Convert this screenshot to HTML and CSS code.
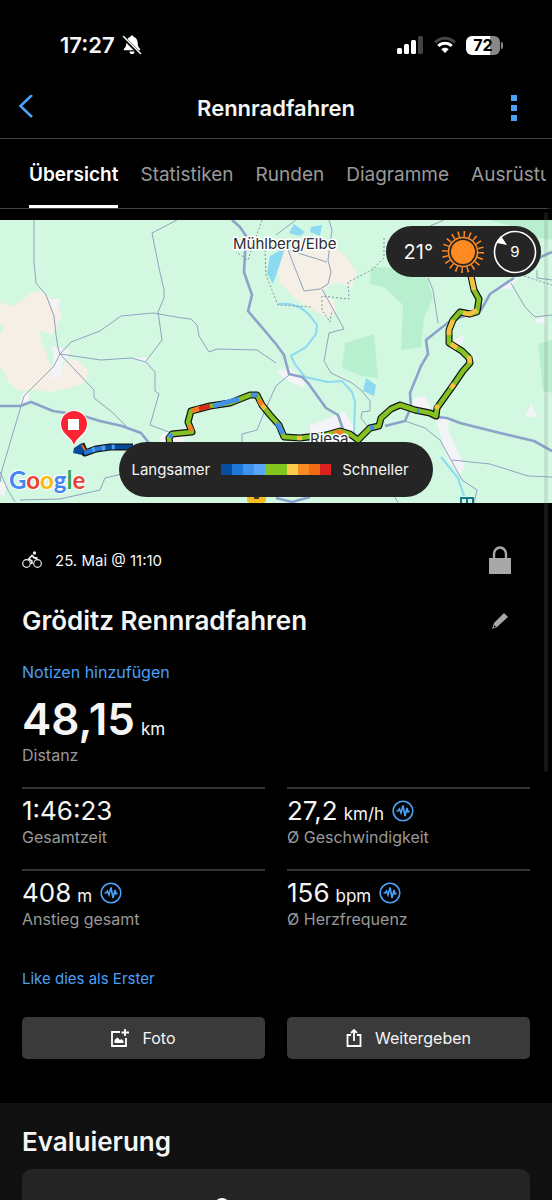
FILE: index.html
```html
<!DOCTYPE html>
<html lang="de">
<head>
  <meta charset="UTF-8">
  <meta name="viewport" content="width=device-width, initial-scale=1">
  <title>Rennradfahren</title>
  <link rel="stylesheet" href="styles.css">
</head>
<body>
  <div class="status-bar">
    <div class="status-left">
      <span class="time">17:27</span>
      <svg class="bell" width="20" height="20" viewBox="0 0 20 20">
        <path fill="#fff" d="M10 0.500c1 0 1.600.6 1.800 1.500 2.600.8 3.800 3 3.900 6 .1 3.300 1 4.500 2.300 5.700.6.700.2 1.600-.6 1.600H2.600c-.8 0-1.200-.9-.6-1.600C3.300 12.500 4.200 11.300 4.300 8c.1-3 1.300-5.200 3.900-6C8.400 1.100 9 .5 10 .5zM7.300 16.500h5.400c-.2 1.600-1.300 2.600-2.700 2.600s-2.500-1-2.700-2.600z"/>
        <path stroke="#000" stroke-width="3.600" d="M1.500 2.500 18 19"/>
        <path stroke="#fff" stroke-width="1.500" stroke-linecap="round" d="M1.500 1.500 18.500 18.500"/>
      </svg>
    </div>
    <div class="status-right">
      <svg width="27" height="18" viewBox="0 0 27 18">
        <rect x="0" y="12" width="5" height="6" rx="1.500" fill="#fff"/>
        <rect x="7" y="8" width="5" height="10" rx="1.500" fill="#fff"/>
        <rect x="14" y="4" width="5" height="14" rx="1.500" fill="#fff"/>
        <rect x="21" y="0" width="5" height="18" rx="1.500" fill="#444"/>
      </svg>
      <svg width="22" height="18" viewBox="0 0 22 18" fill="none">
        <path stroke="#444" stroke-width="3" d="M1 6.500C6.500 .7 15.500.7 21 6.500"/>
        <path stroke="#fff" stroke-width="3" d="M4.300 10c3.800-3.800 9.600-3.800 13.400 0"/>
        <path fill="#fff" d="M7.300 13.200c2.200-2 5.200-2 7.400 0L11 17z"/>
      </svg>
      <span class="battery"><span class="battery-level">72</span></span>
    </div>
  </div>

  <header class="header">
    <button class="icon-button" aria-label="Zurück">
      <svg width="16" height="26" viewBox="0 0 16 26" fill="none" stroke="#4ba0f8" stroke-width="2.600"><path d="M14 0 2.500 11 14 22"/></svg>
    </button>
    <h1>Rennradfahren</h1>
    <button class="icon-button menu" aria-label="Menü">
      <svg width="6" height="26" viewBox="0 0 6 26" fill="#4ba0f8"><path d="M0 0h6v6H0zM0 10h6v6H0zM0 20h6v6H0z"/></svg>
    </button>
  </header>

  <nav class="tabs">
    <a href="#uebersicht" class="active">Übersicht</a>
    <a href="#statistiken">Statistiken</a>
    <a href="#runden">Runden</a>
    <a href="#diagramme">Diagramme</a>
    <a href="#ausruestung">Ausrüstung</a>
  </nav>

  <main class="content" id="uebersicht">
    <div class="map">
      <svg class="map-canvas" viewBox="0 220 552 283">
        <rect y="220" width="552" height="283" fill="#d2f8e2"/>
        <!-- towns and open land -->
        <g fill="#f5efe5">
          <path d="M0 302 10 306 20 302 31 293 42 291 50 298 58 305 62 315 58 325 52 335 39 330 44 347 50 364 60 368 70 358 80 362 88 370 86 382 70 388 50 392 34 390 20 391 10 384 0 366V334l4-6-4-5z"/>
          <path d="M283 250 300 246 330 245 345 255 357 272 352 287 335 282 322 292 334 300 336 312 328 318 308 307 292 296 280 282 277 270z"/>
        </g>
        <g fill="#f4f4f8">
          <path d="M49 299 60 299 59 307 54 309zM52 346 70 350 68 358 61 364 62 377 50 378 54 360zM22 394 30 391 28 403 20 402zM160 437 168 430 185 436 184 443H160zM277 372 290 368 306 382 304 388 290 382zM310 425 344 412 356 430 350 442H310zM413 398 426 396 432 412 412 412zM436 420 450 418 448 430 465 466 460 476 448 460zM531 404 538 418 525 416zM455 340 464 334 462 346 454 346zM538 318 546 317 545 324 534 322zM496 290 520 276 510 289zM128 358 148 358 146 363zM0 482 6 484 4 498 0 494z"/>
        </g>
        <!-- forest -->
        <g fill="#b8f0cf">
          <path d="M371 267 417 268 427 278 433 298 424 318 421 347 401 350 403 305 384 287 370 284zM345 343 374 334 378 378 362 376 342 368zM488 220H552V240L530 237 520 228zM538 344 552 340V393L543 391z"/>
        </g>
        <!-- water -->
        <path fill="#8bdaf2" d="M294 224 305 232 300 236 289 233zM311 227 322 225 320 236 310 232zM270 256 285 248 280 264 273 284 267 273zM366 378 376 385 374 396 363 391z"/>
        <g fill="none" stroke="#8bdaf2" stroke-width="2">
          <path d="M278 304C292 303 302 306 311 317L317 325 316 334 306 347 291 356 295 364 305 377 328 382 342 381 352 392 355 402 354 434M441 457 458 478 464 496"/>
        </g>
        <!-- minor roads -->
        <g fill="none" stroke="#8fa3bd" stroke-width="1">
          <path d="M34 220V262L36 283 46 295 54 316 56 335 58 348 60 354 71 342 100 331 121 316 153 313 182 318 191 319 197 325 199 336 209 352 217 349 257 350 276 363"/>
          <path d="M177 220 152 233 159 268 164 290 164 298 158 312 162 340 146 361M60 354 101 360 131 358 146 362 155 372 155 391 159 394 150 425 169 432"/>
          <path d="M60 354 54 366 24 396 2 470 0 482M60 354 94 390 94 398 112 412 126 426M0 472 8 490 15 502M20 500 60 499 100 490 105 478 122 474"/>
          <path d="M329 220 332 230 328 260 331 272 328 284 320 289 304 291 288 250M276 235 296 220M288 250 327 262M322 289 344 329 329 333 324 361 331 373 352 383 362 391 370 401 370 411 362 412 361 418 368 427"/>
          <path d="M428 278 433 290 438 323M511 283 525 307 535 317 552 315M537 270V278L552 280M430 226 444 220M405 421 425 428 440 440 462 480 477 490 474 503M452 460 490 464 528 476 552 477"/>
          <path d="M242 442V434L257 430 266 408 276 386 289 375M395 497 398 503"/>
        </g>
        <g fill="none" stroke="#8095a5" stroke-width="1" stroke-dasharray="2 2">
          <path d="M262 220 248 260 236 252M265 250 266 275 278 305 312 307M384 238 384 258 372 270 348 282 349 299 322 296 322 310 330 322 332 310M524 276 552 285"/>
        </g>
        <!-- main roads -->
        <g fill="none" stroke="#8ba3ca" stroke-width="2.600" stroke-linejoin="round">
          <path d="M232 220 240 227 246 236 244 272 252 295 248 311 276 344 284 355 289 374 302 377 308 383 326 408 338 415 344 432"/>
          <path d="M0 406 20 406 31 402 53 411 80 415 100 421 122 426 141 433 149 443M276 498 292 502 310 497"/>
          <path d="M552 252 534 260M514 278 490 294 481 310 450 321 426 340 428 354 421 366 410 393 411 407 405 421 385 426M437 417 447 418 460 423 500 433 534 441 552 451"/>
        </g>
        <!-- track -->
        <g fill="none" stroke-linejoin="round">
          <path stroke="#111" stroke-width="7" d="M471 276 474 290 479 299 477 312 470 314 460 312 453 320 449 330 449 343 462 351 469 358 470 363 463 371 452 387 437 408 436 416 430 413 415 410 400 405 391 409 381 418 379 426 370 428 358 440 350 434 340 431 326 435 300 438 284 437 279 425 270 415 262 405 257 395 250 395 230 403 210 406 191 411 188 422 192 432 172 434 169 438 170 445M133 447 110 447 96 449 85 453 81 444"/>
          <g stroke-width="4.600">
            <path stroke="#84c224" d="M471 276 474 290 479 299 477 312 470 314 460 312 453 320 449 330 449 343 462 351 469 358 470 363 463 371 452 387 437 408 436 416 430 413 415 410 400 405 391 409 381 418 379 426 370 428 358 440 350 434 340 431 326 435 300 438 284 437 279 425 270 415 262 405 257 395 250 395 230 403 210 406 191 411 188 422 192 432 172 434 169 438 170 445"/>
            <path stroke="#f3c240" d="M471 276 474 290M477 310 470 314 463 313M453 320 449 330 449 335M451 344 457 348M469 356 470 363M454 384 451 388M438 405 436 409M302 438 297 438M265 409 260 402"/>
            <path stroke="#f57c1f" d="M192 431 189 425M192 411 200 408M343 432 334 433M262 405 259 400"/>
            <path stroke="#dc2b1c" d="M199 409 210 406"/>
            <path stroke="#448fe8" d="M213 406 239 399M172 434 169 437M251 395 258 395M283 434 277 423M419 411 417 411M370 428 374 427"/>
            <path stroke="#2876cf" d="M84 453 96 449 110 447"/>
            <path stroke="#084a9c" d="M106 447H133"/>
            <path stroke="#4ba0f8" stroke-dasharray="3 7" d="M92 450 110 447 121 447"/>
          </g>
          <path fill="#084a9c" d="M74 448 82 443 84 450 82 455 73 453z"/>
          <path stroke="#ef6b18" stroke-width="2" d="M82 445 85 450"/>
        </g>
        <path fill="#fff" d="M74 447C72 439 60 435 60 424a14 14 0 0 1 28 0C88 435 76 439 74 447z"/>
        <path fill="#fb2432" d="M74 445C72 437 61 434 61 424a13 13 0 0 1 26 0C87 434 76 437 74 445z"/>
        <path fill="#fff" d="M68 419h11v11H68z"/>
        <g class="map-label">
          <text x="233" y="249">Mühlberg/Elbe</text>
          <text x="310" y="444">Riesa</text>
        </g>
        <path fill="#f5bd1d" d="M247 495H266V500Q266 503 262 503H251Q247 503 247 500z"/>
        <path stroke="#493a0a" stroke-width="2" d="M254 498H259"/>
        <path fill="#d2f8e2" stroke="#16798d" stroke-width="2" d="M461 498H473V506H461zM467 498V503"/>
      </svg>
      <div class="google"><span class="g-blue">G</span><span class="g-red">o</span><span class="g-yellow">o</span><span class="g-blue">g</span><span class="g-green">l</span><span class="g-red">e</span></div>
      <div class="weather">
        <span>21°</span>
        <svg width="44" height="44" viewBox="0 0 44 44">
          <circle cx="22" cy="22" r="18" fill="none" stroke="#ff8a22" stroke-width="6" stroke-dasharray="1.500 4.155"/>
          <circle cx="22" cy="22" r="14.500" fill="#252525" stroke="#ff8a22" stroke-width="1.500"/>
          <circle cx="22" cy="22" r="12" fill="#ff8a22"/>
        </svg>
        <svg width="44" height="44" viewBox="0 0 44 44">
          <circle cx="22" cy="22" r="20.500" fill="none" stroke="#fff" stroke-width="1.600"/>
          <path fill="#fff" d="M4 13 8 6 14 15z"/>
          <text class="wind" x="22" y="27" text-anchor="middle">9</text>
        </svg>
      </div>
      <div class="legend">
        <span>Langsamer</span>
        <div class="legend-scale"><i></i><i></i><i></i><i></i><i></i><i></i><i></i><i></i><i></i><i></i></div>
        <span>Schneller</span>
      </div>
    </div>

    <section class="activity">
      <div class="activity-row date-row">
        <svg width="20" height="18" viewBox="0 0 20 18" fill="none" stroke="#eee" stroke-width="1.200">
          <circle cx="4.500" cy="12.500" r="3.800"/>
          <circle cx="15.500" cy="12.500" r="3.800"/>
          <circle cx="12.500" cy="2" r="1.700" fill="#eee" stroke="none"/>
          <path stroke-width="1.800" d="M9.800 13V10L6.800 8 10 4.500 12.500 7H15.500"/>
        </svg>
        <span class="date">25. Mai @ 11:10</span>
        <button class="icon-button" aria-label="Privatsphäre">
          <svg width="22" height="28" viewBox="0 0 22 28"><path fill="#a8a8a8" d="M0 12h22v16H0z"/><path fill="none" stroke="#a8a8a8" stroke-width="2.400" d="M5 13V8a6 6.500 0 0 1 12 0v5"/></svg>
        </button>
      </div>
      <div class="activity-row title-row">
        <h2>Gröditz Rennradfahren</h2>
        <button class="icon-button edit" aria-label="Bearbeiten">
          <svg width="18" height="18" viewBox="0 0 18 18"><path fill="#a8a8a8" d="M13 1 17 5 6 15 1 17 3 11z"/><path fill="#000" d="M3.200 13 5 15 2.700 15.600z"/></svg>
        </button>
      </div>
      <a class="link" href="#notizen">Notizen hinzufügen</a>

      <div class="distance">
        <div class="value"><strong>48,15</strong> <span class="unit">km</span></div>
        <div class="label">Distanz</div>
      </div>

      <div class="stats">
        <div class="stat">
          <div class="value">1:46:23</div>
          <div class="label">Gesamtzeit</div>
        </div>
        <div class="stat">
          <div class="value">27,2 <span class="unit">km/h</span>
            <svg class="pulse" viewBox="0 0 22 22"><circle cx="11" cy="11" r="9.800"/><path d="M4.500 11H6L7.500 9 9 13 11 5.500 13 16 15 8 16 12 17.500 11"/></svg>
          </div>
          <div class="label">Ø Geschwindigkeit</div>
        </div>
        <div class="stat">
          <div class="value">408 <span class="unit">m</span>
            <svg class="pulse" viewBox="0 0 22 22"><circle cx="11" cy="11" r="9.800"/><path d="M4.500 11H6L7.500 9 9 13 11 5.500 13 16 15 8 16 12 17.500 11"/></svg>
          </div>
          <div class="label">Anstieg gesamt</div>
        </div>
        <div class="stat">
          <div class="value">156 <span class="unit">bpm</span>
            <svg class="pulse" viewBox="0 0 22 22"><circle cx="11" cy="11" r="9.800"/><path d="M4.500 11H6L7.500 9 9 13 11 5.500 13 16 15 8 16 12 17.500 11"/></svg>
          </div>
          <div class="label">Ø Herzfrequenz</div>
        </div>
      </div>

      <a class="link like" href="#like">Like dies als Erster</a>

      <div class="actions">
        <button class="action">
          <svg width="18" height="20" viewBox="0 0 18 20" fill="none" stroke="#fff" stroke-width="1.800"><path d="M9 4H1V18H15V10M14 1V8M10.500 4.500H18"/><path fill="#fff" stroke="none" d="M3.500 15V12L6.500 9.500 9 12 10.500 11 12.500 13V15z"/></svg>
          Foto
        </button>
        <button class="action">
          <svg width="16" height="20" viewBox="0 0 16 20" fill="none" stroke="#fff" stroke-width="1.800"><path d="M5 7H1.500V18H14.500V7H11M8 13V3M5 5 8 2 11 5"/></svg>
          Weitergeben
        </button>
      </div>
    </section>

    <section class="rating">
      <h2>Evaluierung</h2>
      <div class="rating-card">
        <svg width="16" height="24" viewBox="0 0 16 24" fill="none" stroke="#fff" stroke-width="2"><circle cx="8" cy="8" r="7"/></svg>
      </div>
    </section>
  </main>
  <div class="scroll-thumb"></div>
</body>
</html>
```

FILE: styles.css
```css
* {
  box-sizing: border-box;
}
body {
  font-family: Inter, Roboto, sans-serif;
  background: #000;
  color: #f5f5f5;
  margin: 0;
  height: 100vh;
  display: flex;
  flex-direction: column;
  overflow: hidden;
}
h1, h2 {
  margin: 0;
  font-weight: 600;
}
a {
  text-decoration: none;
}
svg {
  display: block;
  flex-shrink: 0;
}
button {
  font-family: inherit;
  color: inherit;
  border: none;
  cursor: pointer;
}

.status-bar {
  display: flex;
  justify-content: space-between;
  align-items: center;
  height: 78px;
  padding: 12px 50px 0 60px;
  flex-shrink: 0;
}
.status-left, .status-right {
  display: flex;
  align-items: center;
  gap: 10px;
}
.status-left {
  gap: 7px;
}
.time {
  font-size: 22px;
  font-weight: 600;
}
.battery {
  position: relative;
  width: 34px;
  height: 19px;
  border-radius: 6px;
  background: linear-gradient(90deg, #fff 72%, #888 72%);
  margin-right: 2px;
}
.battery::after {
  content: "";
  position: absolute;
  right: -3px;
  top: 6px;
  width: 2px;
  height: 7px;
  border-radius: 0 2px 2px 0;
  background: #888;
}
.battery-level {
  display: block;
  text-align: center;
  color: #000;
  font-size: 16px;
  line-height: 19px;
  font-weight: 700;
}

.header {
  display: flex;
  justify-content: space-between;
  align-items: center;
  height: 61px;
  padding: 0 18px;
  border-bottom: 1px solid #444;
  flex-shrink: 0;
}
.header h1 {
  font-size: 22px;
}
.icon-button {
  display: flex;
  justify-content: center;
  align-items: center;
  background: none;
  padding: 0;
}
.header .icon-button:first-child {
  width: 16px;
  margin-right: 18px;
}
.header .menu {
  justify-content: flex-end;
  padding-right: 17px;
  width: 34px;
}

.tabs {
  display: flex;
  gap: 22px;
  height: 70px;
  padding-left: 29px;
  border-bottom: 1px solid #444;
  border-right: 6px solid #000;
  overflow: hidden;
  flex-shrink: 0;
}
.tabs a {
  display: flex;
  align-items: center;
  padding-top: 4px;
  color: #999;
  font-size: 19px;
  border-bottom: 3px solid transparent;
}
.tabs .active {
  color: #fff;
  font-weight: 600;
  border-bottom-color: #fff;
}

.content {
  flex: 1;
  overflow-y: auto;
  scrollbar-width: none;
  padding-top: 11px;
}
.scroll-thumb {
  position: absolute;
  right: 4px;
  top: 212px;
  width: 4px;
  height: 560px;
  border-radius: 2px;
  background: rgba(120, 120, 120, 0.18);
}

.map {
  position: relative;
}
.map-canvas {
  width: 100%;
  height: auto;
}
.map-label {
  font-size: 15px;
  fill: #2c2c34;
  stroke: #fff;
  stroke-width: 3px;
  paint-order: stroke;
}
.google {
  position: absolute;
  left: 9px;
  bottom: 8px;
  font-family: Lato, sans-serif;
  font-size: 24px;
  line-height: 30px;
  font-weight: 700;
  text-shadow: 0 0 2px #fff, 1px 1px 1px #fff, -1px -1px 1px #fff;
}
.g-blue { color: #4285f4; }
.g-red { color: #ea4335; }
.g-yellow { color: #fbbc04; }
.g-green { color: #34a853; }

.weather {
  position: absolute;
  top: 6px;
  right: 11px;
  display: flex;
  align-items: center;
  gap: 8px;
  height: 51px;
  padding: 0 4px 0 18px;
  border-radius: 26px;
  background: #252525;
  font-size: 20px;
}
.wind {
  fill: #fff;
  font-size: 15px;
}
.legend {
  position: absolute;
  left: 50%;
  bottom: 6px;
  transform: translateX(-50%);
  display: flex;
  align-items: center;
  justify-content: center;
  gap: 11px;
  height: 55px;
  width: 314px;
  padding-right: 12px;
  border-radius: 28px;
  background: #252525;
  font-size: 15px;
}
.legend-scale {
  display: flex;
}
.legend-scale i {
  width: 11px;
  height: 11px;
}
.legend-scale i:nth-child(1) { background: #084fa4; }
.legend-scale i:nth-child(2) { background: #1e78d5; }
.legend-scale i:nth-child(3) { background: #3f92f0; }
.legend-scale i:nth-child(4) { background: #58a6fa; }
.legend-scale i:nth-child(5),
.legend-scale i:nth-child(6) { background: #84c41f; }
.legend-scale i:nth-child(7) { background: #fccb4c; }
.legend-scale i:nth-child(8) { background: #fb8c24; }
.legend-scale i:nth-child(9) { background: #f26a12; }
.legend-scale i:nth-child(10) { background: #dc2020; }

.activity {
  padding: 35px 22px 44px;
}
.activity-row {
  display: flex;
  align-items: center;
}
.activity-row .icon-button {
  width: 22px;
  margin-left: auto;
  margin-right: 19px;
}
.date-row {
  height: 44px;
  gap: 13px;
}
.date {
  font-size: 15px;
}
.title-row {
  height: 77px;
}
.activity h2, .rating h2 {
  font-size: 26px;
  line-height: 32px;
}
.link {
  display: block;
  color: #4ba0f8;
  font-size: 16px;
  line-height: 26px;
}
.distance {
  margin-bottom: 22px;
}
.value {
  display: flex;
  align-items: baseline;
  gap: 6px;
  height: 32px;
  font-size: 26px;
  line-height: 32px;
}
.distance .value {
  height: 60px;
  padding-top: 12px;
  line-height: 44px;
}
.value strong {
  font-size: 44px;
  font-weight: 600;
}
.unit {
  font-size: 17px;
}
.label {
  color: #999;
  font-size: 16px;
  line-height: 20px;
}
.stats {
  display: grid;
  grid-template-columns: 1fr 1fr;
  column-gap: 22px;
}
.stat {
  height: 82px;
  border-top: 2px solid #333;
  padding-top: 6px;
}
.pulse {
  width: 22px;
  height: 22px;
  margin-left: 2px;
  align-self: center;
  fill: none;
  stroke: #4ba0f8;
  stroke-width: 1.6;
}
.like {
  margin-top: 15px;
  font-size: 15px;
}
.actions {
  display: grid;
  grid-template-columns: 1fr 1fr;
  gap: 22px;
  margin-top: 25px;
}
.action {
  display: flex;
  justify-content: center;
  align-items: center;
  gap: 13px;
  height: 42px;
  border-radius: 5px;
  background: #3a3a3a;
  font-size: 16px;
}

.rating {
  padding: 23px 22px 40px;
  background: #101010;
}
.rating-card {
  display: flex;
  justify-content: center;
  margin-top: 11px;
  padding: 29px 108px 28px 0;
  min-height: 120px;
  border-radius: 10px;
  background: #242424;
}
```
